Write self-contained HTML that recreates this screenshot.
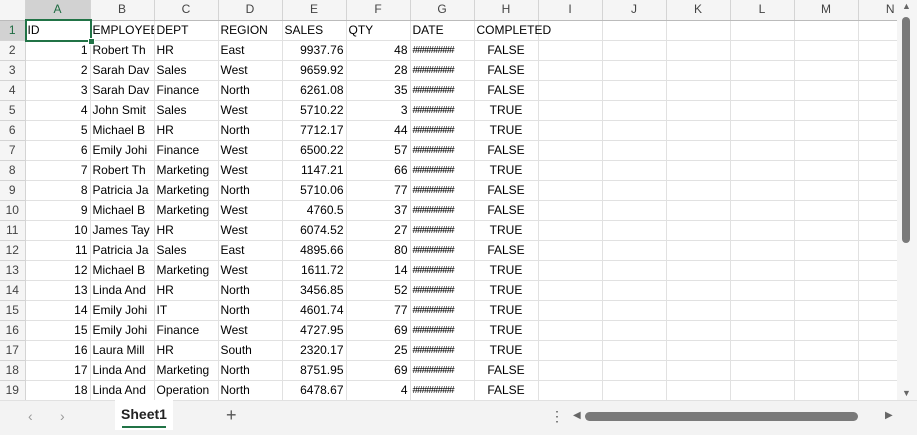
<!DOCTYPE html>
<html><head><style>
body{margin:0;width:917px;height:434px;overflow:hidden;background:#fff;font-family:"Liberation Sans",sans-serif;position:relative}
table{position:absolute;left:0;top:0;border-collapse:collapse;table-layout:fixed;width:897px}
td{height:19px;padding:0 2px;border-right:1px solid #e1e1e1;border-bottom:1px solid #e1e1e1;font-size:12px;color:#000;white-space:nowrap;overflow:hidden;line-height:19px}
tr.h td{background:#f5f5f5;color:#444;text-align:center;border-color:#d4d4d4;font-size:12px;border-bottom:1px solid #bbb}
td.rh{background:#f5f5f5;color:#444;text-align:center;border-right:1px solid #bbb;border-color:#d4d4d4;font-size:12px;padding:0}
tr.h td.sel{background:#d2d2d2;color:#1e6b41;border-bottom:2px solid #217346}
td.rsel{color:#1e6b41;background:#d2d2d2}
.r{text-align:right}.c{text-align:center}
.g{font-size:10px;letter-spacing:-1px}
.ov{overflow:visible}
#a1{position:absolute;left:25px;top:19px;width:63px;height:19px;border:2px solid #217346;box-sizing:content-box}
#a1 i{position:absolute;right:-5px;bottom:-5px;width:5px;height:5px;background:#217346;border:1px solid #fff}
#vs{position:absolute;left:897px;top:0;width:20px;height:400px;background:#f5f5f5}
#vt{position:absolute;left:902px;top:17px;width:8px;height:226px;background:#7a7a7a;border-radius:4px}
#bar{position:absolute;left:0;top:400px;width:917px;height:34px;background:#f3f3f3;border-top:1px solid #e1e1e1}
#tab{position:absolute;left:115px;top:400px;width:58px;height:30px;background:#fff;font-weight:bold;font-size:14px;text-align:center;line-height:28px;color:#222}
#tab:after{content:"";position:absolute;left:7px;right:7px;bottom:2px;height:2px;background:#217346}
#ht{position:absolute;left:585px;top:412px;width:273px;height:9px;border-radius:5px;background:#7a7a7a}
.ar{position:absolute;color:#999;font-size:14px}
</style></head><body>
<table>
<colgroup><col style="width:25px"><col style="width:65px"><col style="width:64px"><col style="width:64px"><col style="width:64px"><col style="width:64px"><col style="width:64px"><col style="width:64px"><col style="width:64px"><col style="width:64px"><col style="width:64px"><col style="width:64px"><col style="width:64px"><col style="width:64px"><col style="width:39px"></colgroup>
<tr class="h"><td></td><td class="sel">A</td><td>B</td><td>C</td><td>D</td><td>E</td><td>F</td><td>G</td><td>H</td><td>I</td><td>J</td><td>K</td><td>L</td><td>M</td><td style="text-align:right">N</td></tr>
<tr><td class="rh rsel">1</td><td>ID</td><td>EMPLOYEE</td><td>DEPT</td><td>REGION</td><td>SALES</td><td>QTY</td><td>DATE</td><td class="ov" style="position:relative;z-index:1">COMPLETED</td><td></td><td></td><td></td><td></td><td></td><td></td></tr>
<tr><td class="rh">2</td><td class="r">1</td><td>Robert Th</td><td>HR</td><td>East</td><td class="r">9937.76</td><td class="r">48</td><td class="g">#########</td><td class="c">FALSE</td><td></td><td></td><td></td><td></td><td></td><td></td></tr>
<tr><td class="rh">3</td><td class="r">2</td><td>Sarah Dav</td><td>Sales</td><td>West</td><td class="r">9659.92</td><td class="r">28</td><td class="g">#########</td><td class="c">FALSE</td><td></td><td></td><td></td><td></td><td></td><td></td></tr>
<tr><td class="rh">4</td><td class="r">3</td><td>Sarah Dav</td><td>Finance</td><td>North</td><td class="r">6261.08</td><td class="r">35</td><td class="g">#########</td><td class="c">FALSE</td><td></td><td></td><td></td><td></td><td></td><td></td></tr>
<tr><td class="rh">5</td><td class="r">4</td><td>John Smit</td><td>Sales</td><td>West</td><td class="r">5710.22</td><td class="r">3</td><td class="g">#########</td><td class="c">TRUE</td><td></td><td></td><td></td><td></td><td></td><td></td></tr>
<tr><td class="rh">6</td><td class="r">5</td><td>Michael B</td><td>HR</td><td>North</td><td class="r">7712.17</td><td class="r">44</td><td class="g">#########</td><td class="c">TRUE</td><td></td><td></td><td></td><td></td><td></td><td></td></tr>
<tr><td class="rh">7</td><td class="r">6</td><td>Emily Johi</td><td>Finance</td><td>West</td><td class="r">6500.22</td><td class="r">57</td><td class="g">#########</td><td class="c">FALSE</td><td></td><td></td><td></td><td></td><td></td><td></td></tr>
<tr><td class="rh">8</td><td class="r">7</td><td>Robert Th</td><td>Marketing</td><td>West</td><td class="r">1147.21</td><td class="r">66</td><td class="g">#########</td><td class="c">TRUE</td><td></td><td></td><td></td><td></td><td></td><td></td></tr>
<tr><td class="rh">9</td><td class="r">8</td><td>Patricia Ja</td><td>Marketing</td><td>North</td><td class="r">5710.06</td><td class="r">77</td><td class="g">#########</td><td class="c">FALSE</td><td></td><td></td><td></td><td></td><td></td><td></td></tr>
<tr><td class="rh">10</td><td class="r">9</td><td>Michael B</td><td>Marketing</td><td>West</td><td class="r">4760.5</td><td class="r">37</td><td class="g">#########</td><td class="c">FALSE</td><td></td><td></td><td></td><td></td><td></td><td></td></tr>
<tr><td class="rh">11</td><td class="r">10</td><td>James Tay</td><td>HR</td><td>West</td><td class="r">6074.52</td><td class="r">27</td><td class="g">#########</td><td class="c">TRUE</td><td></td><td></td><td></td><td></td><td></td><td></td></tr>
<tr><td class="rh">12</td><td class="r">11</td><td>Patricia Ja</td><td>Sales</td><td>East</td><td class="r">4895.66</td><td class="r">80</td><td class="g">#########</td><td class="c">FALSE</td><td></td><td></td><td></td><td></td><td></td><td></td></tr>
<tr><td class="rh">13</td><td class="r">12</td><td>Michael B</td><td>Marketing</td><td>West</td><td class="r">1611.72</td><td class="r">14</td><td class="g">#########</td><td class="c">TRUE</td><td></td><td></td><td></td><td></td><td></td><td></td></tr>
<tr><td class="rh">14</td><td class="r">13</td><td>Linda And</td><td>HR</td><td>North</td><td class="r">3456.85</td><td class="r">52</td><td class="g">#########</td><td class="c">TRUE</td><td></td><td></td><td></td><td></td><td></td><td></td></tr>
<tr><td class="rh">15</td><td class="r">14</td><td>Emily Johi</td><td>IT</td><td>North</td><td class="r">4601.74</td><td class="r">77</td><td class="g">#########</td><td class="c">TRUE</td><td></td><td></td><td></td><td></td><td></td><td></td></tr>
<tr><td class="rh">16</td><td class="r">15</td><td>Emily Johi</td><td>Finance</td><td>West</td><td class="r">4727.95</td><td class="r">69</td><td class="g">#########</td><td class="c">TRUE</td><td></td><td></td><td></td><td></td><td></td><td></td></tr>
<tr><td class="rh">17</td><td class="r">16</td><td>Laura Mill</td><td>HR</td><td>South</td><td class="r">2320.17</td><td class="r">25</td><td class="g">#########</td><td class="c">TRUE</td><td></td><td></td><td></td><td></td><td></td><td></td></tr>
<tr><td class="rh">18</td><td class="r">17</td><td>Linda And</td><td>Marketing</td><td>North</td><td class="r">8751.95</td><td class="r">69</td><td class="g">#########</td><td class="c">FALSE</td><td></td><td></td><td></td><td></td><td></td><td></td></tr>
<tr><td class="rh">19</td><td class="r">18</td><td>Linda And</td><td>Operation</td><td>North</td><td class="r">6478.67</td><td class="r">4</td><td class="g">#########</td><td class="c">FALSE</td><td></td><td></td><td></td><td></td><td></td><td></td></tr>
<tr><td class="rh">20</td><td></td><td></td><td></td><td></td><td></td><td></td><td></td><td></td><td></td><td></td><td></td><td></td><td></td><td></td></tr>
</table>
<div id="a1"><i></i></div>
<div id="vs"></div><div id="vt"></div>
<div class="ar" style="left:902px;top:1px;font-size:9px;color:#666">▲</div>
<div class="ar" style="left:902px;top:388px;font-size:9px;color:#666">▼</div>
<div id="bar"></div>
<div class="ar" style="left:28px;top:408px">&#8249;</div>
<div class="ar" style="left:60px;top:408px">&#8250;</div>
<div id="tab">Sheet1</div>
<div class="ar" style="left:226px;top:405px;font-size:18px;color:#555">+</div>
<div class="ar" style="left:550px;top:408px;color:#555">⋮</div>
<div class="ar" style="left:573px;top:410px;font-size:10px;color:#666">◀</div>
<div class="ar" style="left:885px;top:410px;font-size:10px;color:#666">▶</div>
<div id="ht"></div>
</body></html>
